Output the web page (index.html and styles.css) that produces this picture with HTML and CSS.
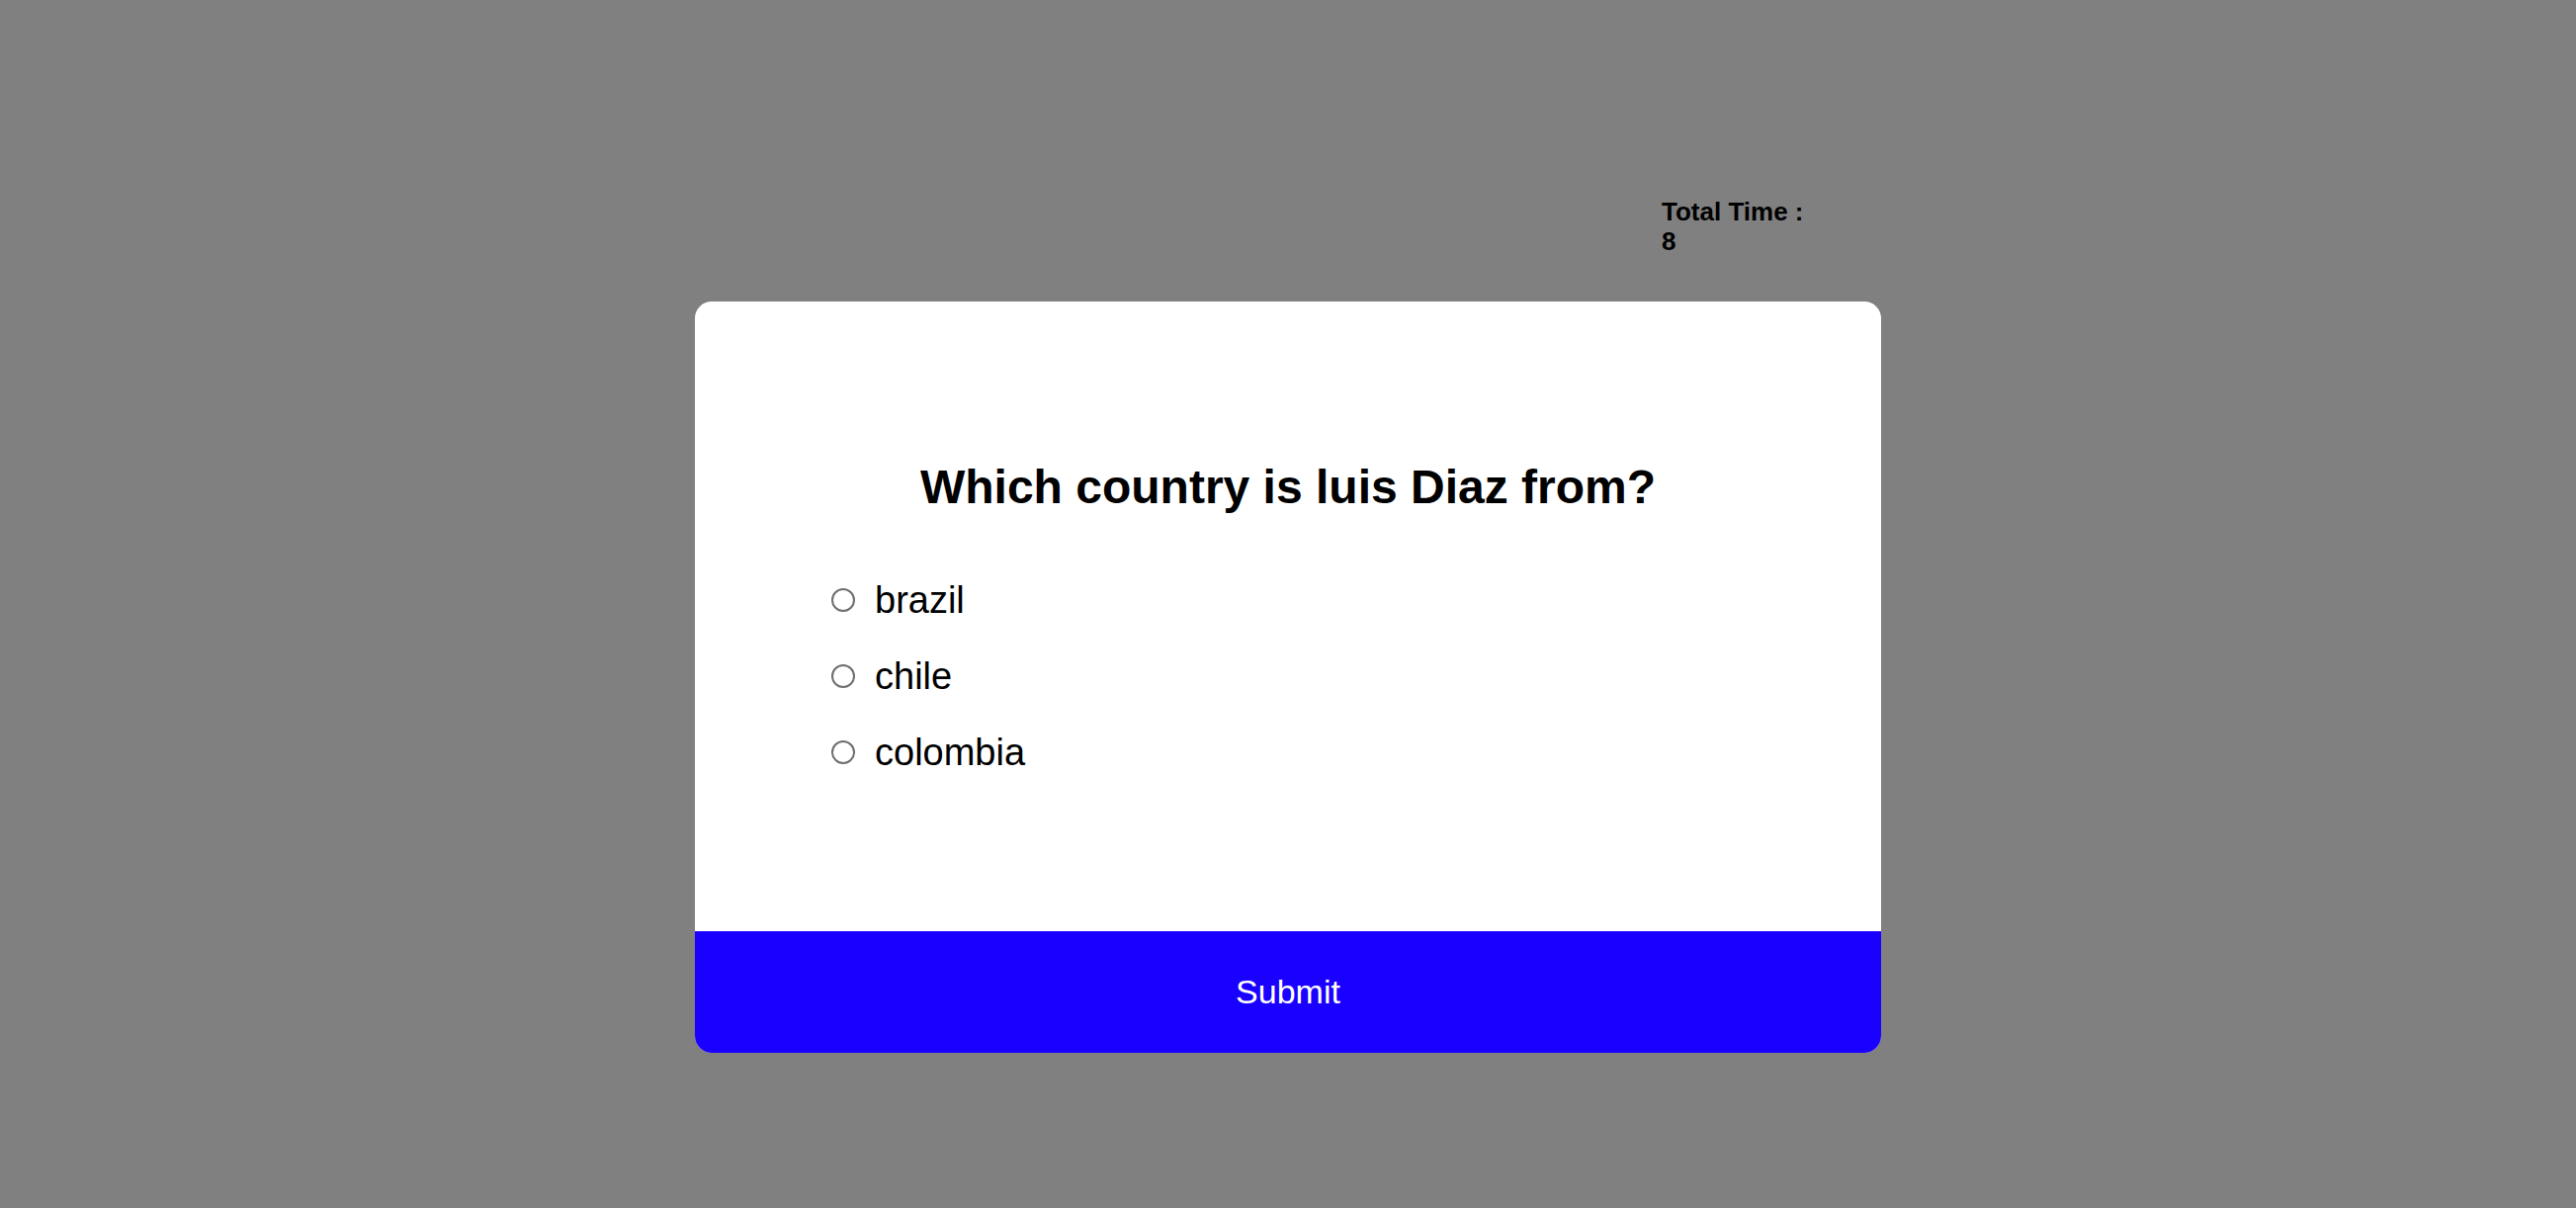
FILE: index.html
```html
<!DOCTYPE html>
<html>
<head>
<meta charset="utf-8">
<link rel="stylesheet" href="styles.css">
</head>
<body>
<div class="page">
  <div class="timer-row">
    <div class="timer">Total Time : 8</div>
  </div>
  <div class="card">
    <div class="card-body">
      <h1 class="question">Which country is luis Diaz from?</h1>
      <div class="options">
        <label class="option"><input type="radio" name="ans" class="radio"><span>brazil</span></label>
        <label class="option"><input type="radio" name="ans" class="radio"><span>chile</span></label>
        <label class="option"><input type="radio" name="ans" class="radio"><span>colombia</span></label>
      </div>
    </div>
    <button class="submit">Submit</button>
  </div>
</div>
</body>
</html>
```

FILE: styles.css
```css
html, body {
  margin: 0;
  padding: 0;
  background: #808080;
  font-family: "Liberation Sans", Arial, Helvetica, sans-serif;
  color: #000;
}
.page {
  width: 1200px;
  margin: 0 auto;
  padding-top: 199px;
}
.timer-row {
  display: flex;
  padding-left: 978px;
}
.timer {
  width: 150px;
  font-size: 26px;
  font-weight: bold;
  line-height: 30px;
}
.card {
  margin-top: 46px;
  height: 760px;
  background: #fff;
  border-radius: 17px;
  overflow: hidden;
  display: flex;
  flex-direction: column;
}
.card-body {
  flex: 1;
  padding-top: 160px;
}
.question {
  margin: 0;
  text-align: center;
  font-size: 48px;
  font-weight: bold;
  line-height: 55px;
}
.options {
  margin-top: 65px;
  padding-left: 138px;
  display: flex;
  flex-direction: column;
  gap: 33px;
}
.option {
  display: flex;
  align-items: center;
  font-size: 38px;
  line-height: 44px;
  height: 44px;
}
.radio {
  appearance: none;
  -webkit-appearance: none;
  margin: 0 20px 0 0;
  width: 24px;
  height: 24px;
  border: 2px solid #6f6f6f;
  border-radius: 50%;
  background: #fff;
  box-sizing: border-box;
  flex: none;
}
.submit {
  height: 123px;
  border: none;
  margin: 0;
  background: #1a00ff;
  color: #fff;
  font-family: "Liberation Sans", Arial, Helvetica, sans-serif;
  font-size: 34px;
  width: 100%;
  flex: none;
}
```
